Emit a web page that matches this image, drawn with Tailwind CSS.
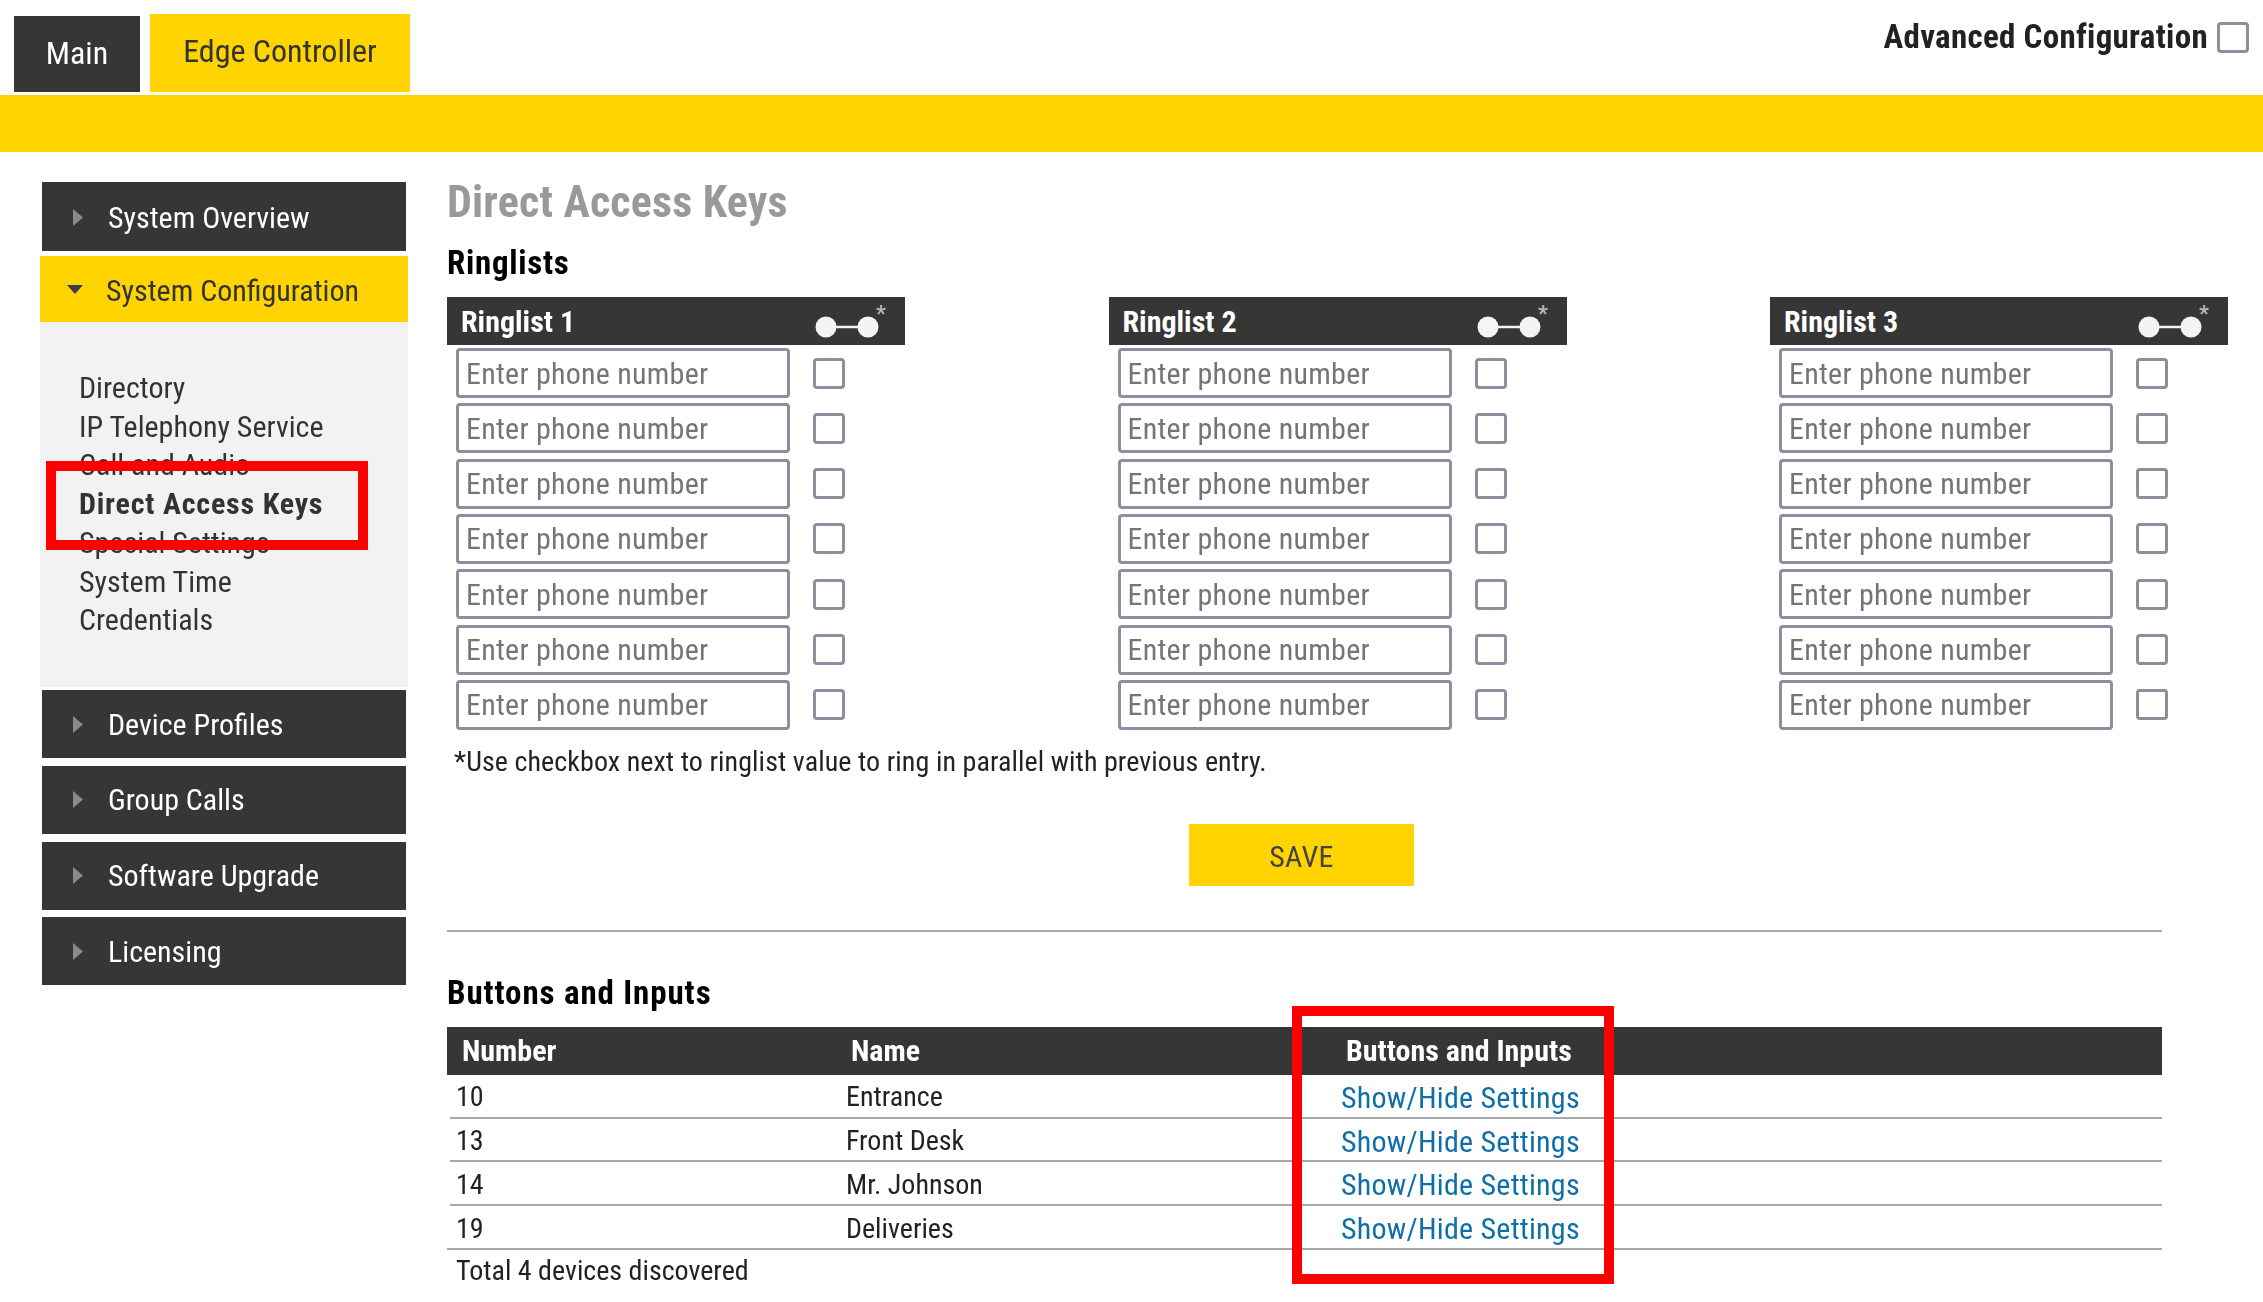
<!DOCTYPE html>
<html><head><meta charset="utf-8"><script src="https://cdn.jsdelivr.net/npm/@tailwindcss/browser@4"></script></head>
<body class="bg-white font-['Roboto_Condensed',Roboto,sans-serif] font-stretch-condensed text-[#222]">
<div class="relative w-[2263px] h-[1302px] overflow-hidden">
<div class="blur-[0.5px]">
<header class="flex items-end h-[92px]">
  <div class="ml-[14px] w-[126px] h-[76px] bg-[#363636] text-white text-[32px] flex items-center justify-center pb-[2px]">Main</div>
  <div class="ml-[10px] w-[260px] h-[78px] bg-[#ffd400] text-[#333] text-[32px] flex items-center justify-center pb-[5px]">Edge Controller</div>
  <div class="ml-auto self-start mt-[21px] mr-[14px] flex items-center gap-[9px]">
    <span class="text-[33px] tracking-[0.3px] font-bold leading-[32px] text-[#222]">Advanced Configuration</span>
    <span class="block w-[32px] h-[31px] border-[3px] border-[#8e8e9e] rounded-[4px]"></span>
  </div>
</header>
<div class="mt-[3px] h-[57px] bg-[#ffd400]"></div>
<div class="flex">
  <aside class="ml-[40px] w-[368px] pt-[30px] text-[30px]">
    <div class="mx-[2px] h-[69px] bg-[#363636] text-white flex items-center">
      <svg class="ml-[31px] mr-[25px] mt-[2px]" width="10" height="17" viewBox="0 0 10 17"><path d="M0 0L10 8.5L0 17Z" fill="#8a8a8a"/></svg><span class="pt-[2px]">System Overview</span>
    </div>
    <div class="mt-[5px] h-[66px] bg-[#ffd400] text-[#333] flex items-center">
      <svg class="ml-[27px] mr-[23px]" width="16" height="9" viewBox="0 0 16 9"><path d="M0 0H16L8 9Z" fill="#3b3b4f"/></svg><span class="pt-[3px]">System Configuration</span>
    </div>
    <nav class="h-[365px] bg-[#f2f2f2] pt-[47px] pl-[39px] leading-[38.7px] text-[#333]">
      <div>Directory</div>
      <div>IP Telephony Service</div>
      <div>Call and Audio</div>
      <div class="font-bold tracking-[0.8px]">Direct Access Keys</div>
      <div>Special Settings</div>
      <div>System Time</div>
      <div>Credentials</div>
    </nav>
    <div class="mt-[3px] flex flex-col gap-[7.8px] text-white">
      <div class="mx-[2px] h-[68px] bg-[#363636] flex items-center"><svg class="ml-[31px] mr-[25px]" width="10" height="17" viewBox="0 0 10 17"><path d="M0 0L10 8.5L0 17Z" fill="#8a8a8a"/></svg><span>Device Profiles</span></div>
      <div class="mx-[2px] h-[68px] bg-[#363636] flex items-center"><svg class="ml-[31px] mr-[25px]" width="10" height="17" viewBox="0 0 10 17"><path d="M0 0L10 8.5L0 17Z" fill="#8a8a8a"/></svg><span>Group Calls</span></div>
      <div class="mx-[2px] h-[68px] bg-[#363636] flex items-center"><svg class="ml-[31px] mr-[25px]" width="10" height="17" viewBox="0 0 10 17"><path d="M0 0L10 8.5L0 17Z" fill="#8a8a8a"/></svg><span>Software Upgrade</span></div>
      <div class="mx-[2px] h-[68px] bg-[#363636] flex items-center"><svg class="ml-[31px] mr-[25px]" width="10" height="17" viewBox="0 0 10 17"><path d="M0 0L10 8.5L0 17Z" fill="#8a8a8a"/></svg><span>Licensing</span></div>
    </div>
  </aside>
  <main class="ml-[39px] w-[1781px] pt-[25px]">
    <h1 class="h-[50px] leading-[50px] text-[44px] tracking-[0.2px] font-bold text-[#999]">Direct Access Keys</h1>
    <h2 class="mt-[18px] h-[36px] leading-[36px] text-[33px] tracking-[0.7px] font-bold text-black">Ringlists</h2>
    <div class="mt-[16px] grid grid-cols-[458px_458px_458px] gap-x-[203.5px]">
      <section>
        <div class="h-[48px] bg-[#363636] text-white text-[30px] font-bold flex items-center justify-between pl-[14px] pr-[16px]"><span>Ringlist 1</span><svg width="74" height="48" viewBox="0 0 74 48"><circle cx="11" cy="30" r="10.5" fill="#f4f4f4"/><circle cx="53" cy="30" r="10.5" fill="#f4f4f4"/><path d="M11 30H53" stroke="#f4f4f4" stroke-width="2.5"/><text x="61" y="24" font-size="22" font-weight="700" fill="#b5b5b5">*</text></svg></div>
        <div class="mt-[3px] flex flex-col gap-[5.33px]">
          <div class="flex items-center"><input placeholder="Enter phone number" class="ml-[9px] w-[334px] h-[50px] border-[3px] border-[#8e8e9e] rounded-[4px] px-[7px] text-[30px] tracking-[0.25px] placeholder:text-[#757575]"><span class="block ml-[23px] w-[32px] h-[31px] border-[3px] border-[#8e8e9e] rounded-[4px]"></span></div>
          <div class="flex items-center"><input placeholder="Enter phone number" class="ml-[9px] w-[334px] h-[50px] border-[3px] border-[#8e8e9e] rounded-[4px] px-[7px] text-[30px] tracking-[0.25px] placeholder:text-[#757575]"><span class="block ml-[23px] w-[32px] h-[31px] border-[3px] border-[#8e8e9e] rounded-[4px]"></span></div>
          <div class="flex items-center"><input placeholder="Enter phone number" class="ml-[9px] w-[334px] h-[50px] border-[3px] border-[#8e8e9e] rounded-[4px] px-[7px] text-[30px] tracking-[0.25px] placeholder:text-[#757575]"><span class="block ml-[23px] w-[32px] h-[31px] border-[3px] border-[#8e8e9e] rounded-[4px]"></span></div>
          <div class="flex items-center"><input placeholder="Enter phone number" class="ml-[9px] w-[334px] h-[50px] border-[3px] border-[#8e8e9e] rounded-[4px] px-[7px] text-[30px] tracking-[0.25px] placeholder:text-[#757575]"><span class="block ml-[23px] w-[32px] h-[31px] border-[3px] border-[#8e8e9e] rounded-[4px]"></span></div>
          <div class="flex items-center"><input placeholder="Enter phone number" class="ml-[9px] w-[334px] h-[50px] border-[3px] border-[#8e8e9e] rounded-[4px] px-[7px] text-[30px] tracking-[0.25px] placeholder:text-[#757575]"><span class="block ml-[23px] w-[32px] h-[31px] border-[3px] border-[#8e8e9e] rounded-[4px]"></span></div>
          <div class="flex items-center"><input placeholder="Enter phone number" class="ml-[9px] w-[334px] h-[50px] border-[3px] border-[#8e8e9e] rounded-[4px] px-[7px] text-[30px] tracking-[0.25px] placeholder:text-[#757575]"><span class="block ml-[23px] w-[32px] h-[31px] border-[3px] border-[#8e8e9e] rounded-[4px]"></span></div>
          <div class="flex items-center"><input placeholder="Enter phone number" class="ml-[9px] w-[334px] h-[50px] border-[3px] border-[#8e8e9e] rounded-[4px] px-[7px] text-[30px] tracking-[0.25px] placeholder:text-[#757575]"><span class="block ml-[23px] w-[32px] h-[31px] border-[3px] border-[#8e8e9e] rounded-[4px]"></span></div>
        </div>
      </section>
      <section>
        <div class="h-[48px] bg-[#363636] text-white text-[30px] font-bold flex items-center justify-between pl-[14px] pr-[16px]"><span>Ringlist 2</span><svg width="74" height="48" viewBox="0 0 74 48"><circle cx="11" cy="30" r="10.5" fill="#f4f4f4"/><circle cx="53" cy="30" r="10.5" fill="#f4f4f4"/><path d="M11 30H53" stroke="#f4f4f4" stroke-width="2.5"/><text x="61" y="24" font-size="22" font-weight="700" fill="#b5b5b5">*</text></svg></div>
        <div class="mt-[3px] flex flex-col gap-[5.33px]">
          <div class="flex items-center"><input placeholder="Enter phone number" class="ml-[9px] w-[334px] h-[50px] border-[3px] border-[#8e8e9e] rounded-[4px] px-[7px] text-[30px] tracking-[0.25px] placeholder:text-[#757575]"><span class="block ml-[23px] w-[32px] h-[31px] border-[3px] border-[#8e8e9e] rounded-[4px]"></span></div>
          <div class="flex items-center"><input placeholder="Enter phone number" class="ml-[9px] w-[334px] h-[50px] border-[3px] border-[#8e8e9e] rounded-[4px] px-[7px] text-[30px] tracking-[0.25px] placeholder:text-[#757575]"><span class="block ml-[23px] w-[32px] h-[31px] border-[3px] border-[#8e8e9e] rounded-[4px]"></span></div>
          <div class="flex items-center"><input placeholder="Enter phone number" class="ml-[9px] w-[334px] h-[50px] border-[3px] border-[#8e8e9e] rounded-[4px] px-[7px] text-[30px] tracking-[0.25px] placeholder:text-[#757575]"><span class="block ml-[23px] w-[32px] h-[31px] border-[3px] border-[#8e8e9e] rounded-[4px]"></span></div>
          <div class="flex items-center"><input placeholder="Enter phone number" class="ml-[9px] w-[334px] h-[50px] border-[3px] border-[#8e8e9e] rounded-[4px] px-[7px] text-[30px] tracking-[0.25px] placeholder:text-[#757575]"><span class="block ml-[23px] w-[32px] h-[31px] border-[3px] border-[#8e8e9e] rounded-[4px]"></span></div>
          <div class="flex items-center"><input placeholder="Enter phone number" class="ml-[9px] w-[334px] h-[50px] border-[3px] border-[#8e8e9e] rounded-[4px] px-[7px] text-[30px] tracking-[0.25px] placeholder:text-[#757575]"><span class="block ml-[23px] w-[32px] h-[31px] border-[3px] border-[#8e8e9e] rounded-[4px]"></span></div>
          <div class="flex items-center"><input placeholder="Enter phone number" class="ml-[9px] w-[334px] h-[50px] border-[3px] border-[#8e8e9e] rounded-[4px] px-[7px] text-[30px] tracking-[0.25px] placeholder:text-[#757575]"><span class="block ml-[23px] w-[32px] h-[31px] border-[3px] border-[#8e8e9e] rounded-[4px]"></span></div>
          <div class="flex items-center"><input placeholder="Enter phone number" class="ml-[9px] w-[334px] h-[50px] border-[3px] border-[#8e8e9e] rounded-[4px] px-[7px] text-[30px] tracking-[0.25px] placeholder:text-[#757575]"><span class="block ml-[23px] w-[32px] h-[31px] border-[3px] border-[#8e8e9e] rounded-[4px]"></span></div>
        </div>
      </section>
      <section>
        <div class="h-[48px] bg-[#363636] text-white text-[30px] font-bold flex items-center justify-between pl-[14px] pr-[16px]"><span>Ringlist 3</span><svg width="74" height="48" viewBox="0 0 74 48"><circle cx="11" cy="30" r="10.5" fill="#f4f4f4"/><circle cx="53" cy="30" r="10.5" fill="#f4f4f4"/><path d="M11 30H53" stroke="#f4f4f4" stroke-width="2.5"/><text x="61" y="24" font-size="22" font-weight="700" fill="#b5b5b5">*</text></svg></div>
        <div class="mt-[3px] flex flex-col gap-[5.33px]">
          <div class="flex items-center"><input placeholder="Enter phone number" class="ml-[9px] w-[334px] h-[50px] border-[3px] border-[#8e8e9e] rounded-[4px] px-[7px] text-[30px] tracking-[0.25px] placeholder:text-[#757575]"><span class="block ml-[23px] w-[32px] h-[31px] border-[3px] border-[#8e8e9e] rounded-[4px]"></span></div>
          <div class="flex items-center"><input placeholder="Enter phone number" class="ml-[9px] w-[334px] h-[50px] border-[3px] border-[#8e8e9e] rounded-[4px] px-[7px] text-[30px] tracking-[0.25px] placeholder:text-[#757575]"><span class="block ml-[23px] w-[32px] h-[31px] border-[3px] border-[#8e8e9e] rounded-[4px]"></span></div>
          <div class="flex items-center"><input placeholder="Enter phone number" class="ml-[9px] w-[334px] h-[50px] border-[3px] border-[#8e8e9e] rounded-[4px] px-[7px] text-[30px] tracking-[0.25px] placeholder:text-[#757575]"><span class="block ml-[23px] w-[32px] h-[31px] border-[3px] border-[#8e8e9e] rounded-[4px]"></span></div>
          <div class="flex items-center"><input placeholder="Enter phone number" class="ml-[9px] w-[334px] h-[50px] border-[3px] border-[#8e8e9e] rounded-[4px] px-[7px] text-[30px] tracking-[0.25px] placeholder:text-[#757575]"><span class="block ml-[23px] w-[32px] h-[31px] border-[3px] border-[#8e8e9e] rounded-[4px]"></span></div>
          <div class="flex items-center"><input placeholder="Enter phone number" class="ml-[9px] w-[334px] h-[50px] border-[3px] border-[#8e8e9e] rounded-[4px] px-[7px] text-[30px] tracking-[0.25px] placeholder:text-[#757575]"><span class="block ml-[23px] w-[32px] h-[31px] border-[3px] border-[#8e8e9e] rounded-[4px]"></span></div>
          <div class="flex items-center"><input placeholder="Enter phone number" class="ml-[9px] w-[334px] h-[50px] border-[3px] border-[#8e8e9e] rounded-[4px] px-[7px] text-[30px] tracking-[0.25px] placeholder:text-[#757575]"><span class="block ml-[23px] w-[32px] h-[31px] border-[3px] border-[#8e8e9e] rounded-[4px]"></span></div>
          <div class="flex items-center"><input placeholder="Enter phone number" class="ml-[9px] w-[334px] h-[50px] border-[3px] border-[#8e8e9e] rounded-[4px] px-[7px] text-[30px] tracking-[0.25px] placeholder:text-[#757575]"><span class="block ml-[23px] w-[32px] h-[31px] border-[3px] border-[#8e8e9e] rounded-[4px]"></span></div>
        </div>
      </section>
    </div>
    <p class="mt-[17px] ml-[7px] h-[30px] leading-[30px] text-[28px] tracking-[0.08px] text-[#222]">*Use checkbox next to ringlist value to ring in parallel with previous entry.</p>
    <div class="mt-[47px] ml-[742px] w-[225px] h-[62px] bg-[#ffd400] text-[#444] text-[30px] tracking-[0.3px] flex items-center justify-center pt-[4px]">SAVE</div>
    <div class="mt-[44px] w-[1715px] h-[2px] bg-[#a8a8a8]"></div>
    <h2 class="mt-[43px] h-[36px] leading-[36px] text-[33px] tracking-[0.9px] font-bold text-black">Buttons and Inputs</h2>
    <div class="mt-[16px] w-[1715px] text-[28px] text-[#222]">
      <div class="h-[48px] bg-[#363636] text-white text-[30px] font-bold grid grid-cols-[399px_495px_1fr] items-center">
        <span class="pl-[15px]">Number</span><span class="pl-[5px]">Name</span><span class="pl-[5px]">Buttons and Inputs</span>
      </div>
      <div class="ml-[3px] h-[43.7px] border-b-2 border-[#a8a8a8] grid grid-cols-[396px_495px_1fr] items-center"><span class="pl-[6px]">10</span><span>Entrance</span><a class="text-[#0f6fa8] text-[30px] tracking-[0.25px]">Show/Hide Settings</a></div>
      <div class="ml-[3px] h-[43.7px] border-b-2 border-[#a8a8a8] grid grid-cols-[396px_495px_1fr] items-center"><span class="pl-[6px]">13</span><span>Front Desk</span><a class="text-[#0f6fa8] text-[30px] tracking-[0.25px]">Show/Hide Settings</a></div>
      <div class="ml-[3px] h-[43.7px] border-b-2 border-[#a8a8a8] grid grid-cols-[396px_495px_1fr] items-center"><span class="pl-[6px]">14</span><span>Mr. Johnson</span><a class="text-[#0f6fa8] text-[30px] tracking-[0.25px]">Show/Hide Settings</a></div>
      <div class="h-[43.7px] border-b-2 border-[#a8a8a8] grid grid-cols-[399px_495px_1fr] items-center"><span class="pl-[9px]">19</span><span>Deliveries</span><a class="text-[#0f6fa8] text-[30px] tracking-[0.25px]">Show/Hide Settings</a></div>
      <div class="pl-[9px] mt-[6px] h-[30px] leading-[30px]">Total 4 devices discovered</div>
    </div>
  </main>
</div>
</div>
<div class="absolute left-[46px] top-[461px] w-[322px] h-[89px] border-[10px] border-[#ff0000]"></div>
<div class="absolute left-[1292px] top-[1006px] w-[322px] h-[278px] border-[10px] border-[#ff0000]"></div>
</div>
</body></html>
